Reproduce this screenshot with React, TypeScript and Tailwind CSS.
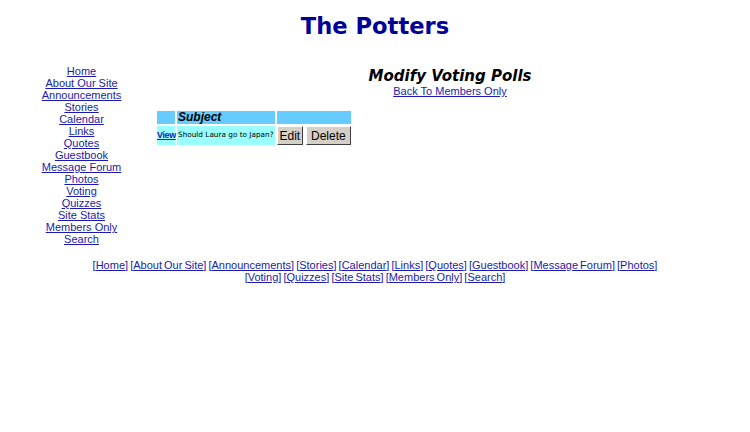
import React from 'react';

const links = [
  'Home',
  'About Our Site',
  'Announcements',
  'Stories',
  'Calendar',
  'Links',
  'Quotes',
  'Guestbook',
  'Message Forum',
  'Photos',
  'Voting',
  'Quizzes',
  'Site Stats',
  'Members Only',
  'Search',
];

const linkCls = 'text-[#1a1ab0] underline';

const App: React.FC = () => {
  return (
    <div className="w-[750px] h-[432px] bg-white font-['Liberation_Sans',Arial,sans-serif] text-[11px] text-black">
      <h1 className="pt-[13px] text-center font-['DejaVu_Sans',Verdana,sans-serif] text-[22.6px] leading-[26px] font-bold text-[#000099]">
        The Potters
      </h1>

      <div className="mt-[26px] flex">
        {/* side nav */}
        <div className="ml-[8px] w-[147px] flex flex-col items-center leading-[12px]">
          {links.map((l) => (
            <a key={l} href="#" className={linkCls}>
              {l}
            </a>
          ))}
        </div>

        {/* main */}
        <div className="w-[590px] flex flex-col">
          <div className="pt-[2px] flex flex-col items-center">
            <h2 className="font-['DejaVu_Sans',Verdana,sans-serif] text-[15px] leading-[18px] font-bold italic">
              Modify Voting Polls
            </h2>
            <a href="#" className={`${linkCls} leading-[12px]`}>
              Back To Members Only
            </a>
          </div>

          <div className="mt-[14px] ml-[2px] grid grid-cols-[18px_98px_74px] grid-rows-[13px_19px] gap-[2px] w-max">
            <div className="bg-[#66ccff]" />
            <div className="bg-[#66ccff] pl-[1px] text-[12px] leading-[13px] font-bold italic">Subject</div>
            <div className="bg-[#66ccff]" />

            <div className="bg-[#99ffff] flex items-center">
              <a href="#" className={`${linkCls} text-[9px] font-bold tracking-[-0.4px]`}>
                View
              </a>
            </div>
            <div className="bg-[#99ffff] flex items-center pl-[1px] font-['DejaVu_Sans',Verdana,sans-serif] text-[7.3px] whitespace-nowrap">
              Should Laura go to Japan?
            </div>
            <div className="flex items-center gap-[3px]">
              <button className="h-[19px] w-[26px] bg-[#d4d0c8] border border-t-white border-l-white border-r-[#404040] border-b-[#404040] text-[12px] leading-none">
                Edit
              </button>
              <button className="h-[19px] w-[46px] bg-[#d4d0c8] border border-t-white border-l-white border-r-[#404040] border-b-[#404040] text-[12px] leading-none">
                Delete
              </button>
            </div>
          </div>
        </div>
      </div>

      <div className="mt-[14px] mx-auto w-[600px] text-center leading-[12px] text-[#1a1ab0] [word-spacing:-1px]">
        {links.map((l, i) => (
          <React.Fragment key={l}>
            [<a href="#" className={linkCls}>{l}</a>]{i < links.length - 1 ? ' ' : ''}
          </React.Fragment>
        ))}
      </div>
    </div>
  );
};

export default App;
